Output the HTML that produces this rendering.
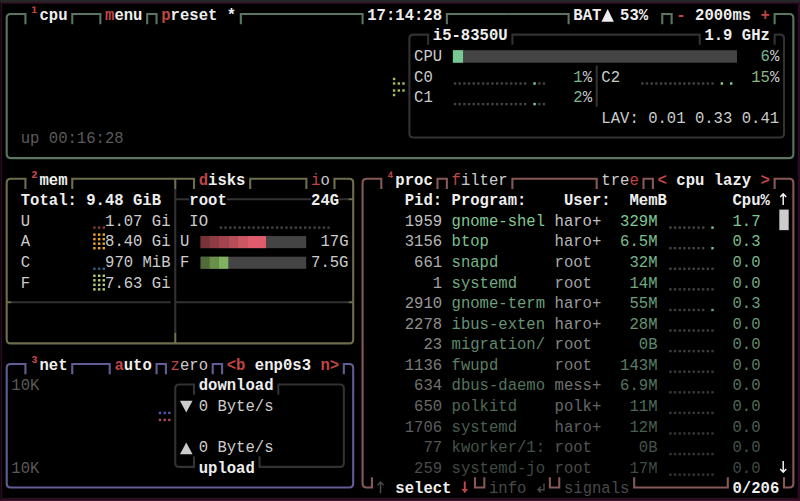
<!DOCTYPE html><html><head><meta charset="utf-8"><style>html,body{margin:0;padding:0;background:#000;width:800px;height:501px;overflow:hidden}svg{display:block}text{font-family:"Liberation Mono",monospace;white-space:pre}</style></head><body>
<svg width="800" height="501" viewBox="0 0 800 501">
<rect x="0" y="0" width="800" height="501" fill="#2c0b24"/>
<rect x="0" y="0" width="800" height="2.4" fill="#262626"/>
<rect x="0" y="2.4" width="1" height="499" fill="#12060f"/>
<rect x="0" y="499" width="800" height="0.6" fill="#14060f"/>
<rect x="0" y="499.6" width="800" height="1.4" fill="#3a1628"/>
<rect x="2.1" y="3.9" width="795.6" height="493.9" fill="#000"/>
<path d="M11.38,13.99H10.70Q6.70,13.99 6.70,17.99V24.29M11.38,13.99H20.75M20.75,13.99H26.48M25.43,12.94V24.29M71.21,13.99H76.94M72.26,12.94V24.29M76.94,13.99H86.30M86.30,13.99H95.67M95.67,13.99H101.40M100.35,12.94V24.29M146.13,13.99H151.86M147.18,12.94V24.29M151.86,13.99H157.59M156.54,12.94V24.29M239.78,13.99H245.51M240.83,12.94V24.29M245.51,13.99H254.88M254.88,13.99H264.24M264.24,13.99H273.61M273.60,13.99H282.97M282.97,13.99H292.33M292.33,13.99H301.70M301.70,13.99H311.06M311.06,13.99H320.43M320.43,13.99H329.80M329.80,13.99H339.16M339.16,13.99H348.52M348.52,13.99H357.89M357.89,13.99H363.62M362.57,12.94V24.29M445.81,13.99H451.54M446.86,12.94V24.29M451.54,13.99H460.90M460.90,13.99H470.27M470.27,13.99H479.63M479.63,13.99H489.00M489.00,13.99H498.37M498.37,13.99H507.73M507.73,13.99H517.10M517.10,13.99H526.46M526.46,13.99H535.83M535.83,13.99H545.19M545.19,13.99H554.55M554.55,13.99H563.92M563.92,13.99H569.65M568.60,12.94V24.29M661.20,13.99H666.94M662.25,12.94V24.29M666.93,13.99H672.67M671.62,12.94V24.29M773.58,13.99H779.32M774.63,12.94V24.29M779.32,13.99H788.68M788.68,13.99H789.36Q793.36,13.99 793.36,17.99V24.29M6.70,24.29V44.87M793.36,24.29V44.87M6.70,44.87V65.46M793.36,44.87V65.46M6.70,65.46V86.05M793.36,65.46V86.05M6.70,86.05V106.64M793.36,86.05V106.64M6.70,106.64V127.22M793.36,106.64V127.22M6.70,127.22V147.81M793.36,127.22V147.81M6.70,147.81V154.10Q6.70,158.10 10.70,158.10H11.38M11.38,158.10H20.75M20.75,158.10H30.12M30.11,158.10H39.48M39.48,158.10H48.85M48.85,158.10H58.21M58.21,158.10H67.58M67.58,158.10H76.94M76.94,158.10H86.30M86.30,158.10H95.67M95.67,158.10H105.03M105.03,158.10H114.40M114.40,158.10H123.76M123.77,158.10H133.13M133.13,158.10H142.50M142.50,158.10H151.86M151.86,158.10H161.23M161.23,158.10H170.59M170.59,158.10H179.96M179.96,158.10H189.32M189.32,158.10H198.69M198.69,158.10H208.05M208.05,158.10H217.42M217.42,158.10H226.78M226.78,158.10H236.15M236.15,158.10H245.51M245.51,158.10H254.88M254.88,158.10H264.24M264.24,158.10H273.61M273.60,158.10H282.97M282.97,158.10H292.33M292.33,158.10H301.70M301.70,158.10H311.06M311.06,158.10H320.43M320.43,158.10H329.80M329.80,158.10H339.16M339.16,158.10H348.52M348.52,158.10H357.89M357.89,158.10H367.25M367.25,158.10H376.62M376.62,158.10H385.99M385.99,158.10H395.35M395.35,158.10H404.71M404.71,158.10H414.08M414.08,158.10H423.44M423.44,158.10H432.81M432.81,158.10H442.18M442.18,158.10H451.54M451.54,158.10H460.90M460.90,158.10H470.27M470.27,158.10H479.63M479.63,158.10H489.00M489.00,158.10H498.37M498.37,158.10H507.73M507.73,158.10H517.10M517.10,158.10H526.46M526.46,158.10H535.83M535.83,158.10H545.19M545.19,158.10H554.55M554.55,158.10H563.92M563.92,158.10H573.28M573.28,158.10H582.65M582.65,158.10H592.01M592.01,158.10H601.38M601.38,158.10H610.75M610.75,158.10H620.11M620.11,158.10H629.48M629.48,158.10H638.84M638.84,158.10H648.21M648.21,158.10H657.57M657.57,158.10H666.94M666.93,158.10H676.30M676.30,158.10H685.66M685.66,158.10H695.03M695.03,158.10H704.39M704.39,158.10H713.76M713.76,158.10H723.12M723.12,158.10H732.49M732.49,158.10H741.86M741.86,158.10H751.22M751.22,158.10H760.59M760.59,158.10H769.95M769.95,158.10H779.32M779.32,158.10H788.68M793.36,147.81V154.10Q793.36,158.10 789.36,158.10H788.68" stroke="#5a7560" stroke-width="2.1" fill="none" stroke-linecap="butt"/>
<path d="M414.08,34.58H413.40Q409.40,34.58 409.40,38.58V44.87M414.08,34.58H423.44M423.44,34.58H429.18M428.13,33.53V44.87M511.36,34.58H517.10M512.41,33.53V44.87M517.10,34.58H526.46M526.46,34.58H535.83M535.83,34.58H545.19M545.19,34.58H554.55M554.55,34.58H563.92M563.92,34.58H573.28M573.28,34.58H582.65M582.65,34.58H592.01M592.01,34.58H601.38M601.38,34.58H610.75M610.75,34.58H620.11M620.11,34.58H629.48M629.48,34.58H638.84M638.84,34.58H648.21M648.21,34.58H657.57M657.57,34.58H666.94M666.93,34.58H676.30M676.30,34.58H685.66M685.66,34.58H695.03M695.03,34.58H700.76M699.71,33.53V44.87M773.58,34.58H779.32M774.63,33.53V44.87M779.32,34.58H780.00Q784.00,34.58 784.00,38.58V44.87M409.40,44.87V65.46M784.00,44.87V65.46M409.40,65.46V86.05M784.00,65.46V86.05M409.40,86.05V106.64M784.00,86.05V106.64M409.40,106.64V127.22M784.00,106.64V127.22M409.40,127.22V133.52Q409.40,137.52 413.40,137.52H414.08M414.08,137.52H423.44M423.44,137.52H432.81M432.81,137.52H442.18M442.18,137.52H451.54M451.54,137.52H460.90M460.90,137.52H470.27M470.27,137.52H479.63M479.63,137.52H489.00M489.00,137.52H498.37M498.37,137.52H507.73M507.73,137.52H517.10M517.10,137.52H526.46M526.46,137.52H535.83M535.83,137.52H545.19M545.19,137.52H554.55M554.55,137.52H563.92M563.92,137.52H573.28M573.28,137.52H582.65M582.65,137.52H592.01M592.01,137.52H601.38M601.38,137.52H610.75M610.75,137.52H620.11M620.11,137.52H629.48M629.48,137.52H638.84M638.84,137.52H648.21M648.21,137.52H657.57M657.57,137.52H666.94M666.93,137.52H676.30M676.30,137.52H685.66M685.66,137.52H695.03M695.03,137.52H704.39M704.39,137.52H713.76M713.76,137.52H723.12M723.12,137.52H732.49M732.49,137.52H741.86M741.86,137.52H751.22M751.22,137.52H760.59M760.59,137.52H769.95M769.95,137.52H779.32M784.00,127.22V133.52Q784.00,137.52 780.00,137.52H779.32M596.70,65.46V86.05M596.70,86.05V106.64M174.22,199.28H179.96M175.27,188.98V209.57M175.27,209.57V230.16M175.27,230.16V250.74M175.27,250.74V271.33M175.27,271.33V291.92M174.22,302.21H179.96M175.27,291.92V312.50M175.27,312.50V333.09M179.96,199.28H189.32M226.78,199.28H236.15M236.15,199.28H245.51M245.51,199.28H254.88M254.88,199.28H264.24M264.24,199.28H273.61M273.60,199.28H282.97M282.97,199.28H292.33M292.33,199.28H301.70M301.70,199.28H311.06M339.16,199.28H348.52M11.38,302.21H20.75M20.75,302.21H30.12M30.11,302.21H39.48M39.48,302.21H48.85M48.85,302.21H58.21M58.21,302.21H67.58M67.58,302.21H76.94M76.94,302.21H86.30M86.30,302.21H95.67M95.67,302.21H105.03M105.03,302.21H114.40M114.40,302.21H123.76M123.77,302.21H133.13M133.13,302.21H142.50M142.50,302.21H151.86M151.86,302.21H161.23M161.23,302.21H170.59M179.96,302.21H189.32M189.32,302.21H198.69M198.69,302.21H208.05M208.05,302.21H217.42M217.42,302.21H226.78M226.78,302.21H236.15M236.15,302.21H245.51M245.51,302.21H254.88M254.88,302.21H264.24M264.24,302.21H273.61M273.60,302.21H282.97M282.97,302.21H292.33M292.33,302.21H301.70M301.70,302.21H311.06M311.06,302.21H320.43M320.43,302.21H329.80M329.80,302.21H339.16M339.16,302.21H348.52M179.96,384.56H179.27Q175.27,384.56 175.27,388.56V394.85M179.96,384.56H189.32M189.32,384.56H195.05M194.00,383.51V394.85M277.24,384.56H282.97M278.29,383.51V394.85M282.97,384.56H292.33M292.33,384.56H301.70M301.70,384.56H311.06M311.06,384.56H320.43M320.43,384.56H329.80M329.80,384.56H339.16M339.16,384.56H339.84Q343.84,384.56 343.84,388.56V394.85M175.27,394.85V415.44M343.84,394.85V415.44M175.27,415.44V436.03M343.84,415.44V436.03M175.27,436.03V456.61M343.84,436.03V456.61M175.27,456.61V462.91Q175.27,466.91 179.27,466.91H179.96M179.96,466.91H189.32M189.32,466.91H195.05M194.00,456.61V467.96M258.51,466.91H264.24M259.56,456.61V467.96M264.24,466.91H273.61M273.60,466.91H282.97M282.97,466.91H292.33M292.33,466.91H301.70M301.70,466.91H311.06M311.06,466.91H320.43M320.43,466.91H329.80M329.80,466.91H339.16M343.84,456.61V462.91Q343.84,466.91 339.84,466.91H339.16" stroke="#323232" stroke-width="2.1" fill="none" stroke-linecap="butt"/>
<path d="M11.38,178.69H10.70Q6.70,178.69 6.70,182.69V188.98M11.38,178.69H20.75M20.75,178.69H26.48M25.43,177.64V188.98M71.21,178.69H76.94M72.26,177.64V188.98M76.94,178.69H86.30M86.30,178.69H95.67M95.67,178.69H105.03M105.03,178.69H114.40M114.40,178.69H123.76M123.77,178.69H133.13M133.13,178.69H142.50M142.50,178.69H151.86M151.86,178.69H161.23M161.23,178.69H170.59M170.59,178.69H179.96M175.27,177.64V188.98M179.96,178.69H189.32M189.32,178.69H195.05M194.00,177.64V188.98M249.14,178.69H254.88M250.19,177.64V188.98M254.88,178.69H264.24M264.24,178.69H273.61M273.60,178.69H282.97M282.97,178.69H292.33M292.33,178.69H301.70M301.70,178.69H307.43M306.38,177.64V188.98M333.43,178.69H339.16M334.48,177.64V188.98M339.16,178.69H348.52M348.52,178.69H349.21Q353.21,178.69 353.21,182.69V188.98M6.70,188.98V209.57M348.52,199.28H354.26M353.21,188.98V209.57M6.70,209.57V230.16M353.21,209.57V230.16M6.70,230.16V250.74M353.21,230.16V250.74M6.70,250.74V271.33M353.21,250.74V271.33M6.70,271.33V291.92M353.21,271.33V291.92M5.65,302.21H11.38M6.70,291.92V312.50M348.52,302.21H354.26M353.21,291.92V312.50M6.70,312.50V333.09M353.21,312.50V333.09M6.70,333.09V339.39Q6.70,343.39 10.70,343.39H11.38M11.38,343.39H20.75M20.75,343.39H30.12M30.11,343.39H39.48M39.48,343.39H48.85M48.85,343.39H58.21M58.21,343.39H67.58M67.58,343.39H76.94M76.94,343.39H86.30M86.30,343.39H95.67M95.67,343.39H105.03M105.03,343.39H114.40M114.40,343.39H123.76M123.77,343.39H133.13M133.13,343.39H142.50M142.50,343.39H151.86M151.86,343.39H161.23M161.23,343.39H170.59M170.59,343.39H179.96M175.27,333.09V344.44M179.96,343.39H189.32M189.32,343.39H198.69M198.69,343.39H208.05M208.05,343.39H217.42M217.42,343.39H226.78M226.78,343.39H236.15M236.15,343.39H245.51M245.51,343.39H254.88M254.88,343.39H264.24M264.24,343.39H273.61M273.60,343.39H282.97M282.97,343.39H292.33M292.33,343.39H301.70M301.70,343.39H311.06M311.06,343.39H320.43M320.43,343.39H329.80M329.80,343.39H339.16M339.16,343.39H348.52M353.21,333.09V339.39Q353.21,343.39 349.21,343.39H348.52" stroke="#6e6e4c" stroke-width="2.1" fill="none" stroke-linecap="butt"/>
<path d="M11.38,363.97H10.70Q6.70,363.97 6.70,367.97V374.27M11.38,363.97H20.75M20.75,363.97H26.48M25.43,362.92V374.27M71.21,363.97H76.94M72.26,362.92V374.27M76.94,363.97H86.30M86.30,363.97H95.67M95.67,363.97H105.03M105.03,363.97H110.77M109.72,362.92V374.27M155.49,363.97H161.23M156.54,362.92V374.27M161.23,363.97H166.96M165.91,362.92V374.27M211.68,363.97H217.42M212.73,362.92V374.27M217.42,363.97H223.15M222.10,362.92V374.27M342.79,363.97H348.52M343.84,362.92V374.27M348.52,363.97H349.21Q353.21,363.97 353.21,367.97V374.27M6.70,374.27V394.85M353.21,374.27V394.85M6.70,394.85V415.44M353.21,394.85V415.44M6.70,415.44V436.03M353.21,415.44V436.03M6.70,436.03V456.61M353.21,436.03V456.61M6.70,456.61V477.20M353.21,456.61V477.20M6.70,477.20V483.49Q6.70,487.49 10.70,487.49H11.38M11.38,487.49H20.75M20.75,487.49H30.12M30.11,487.49H39.48M39.48,487.49H48.85M48.85,487.49H58.21M58.21,487.49H67.58M67.58,487.49H76.94M76.94,487.49H86.30M86.30,487.49H95.67M95.67,487.49H105.03M105.03,487.49H114.40M114.40,487.49H123.76M123.77,487.49H133.13M133.13,487.49H142.50M142.50,487.49H151.86M151.86,487.49H161.23M161.23,487.49H170.59M170.59,487.49H179.96M179.96,487.49H189.32M189.32,487.49H198.69M198.69,487.49H208.05M208.05,487.49H217.42M217.42,487.49H226.78M226.78,487.49H236.15M236.15,487.49H245.51M245.51,487.49H254.88M254.88,487.49H264.24M264.24,487.49H273.61M273.60,487.49H282.97M282.97,487.49H292.33M292.33,487.49H301.70M301.70,487.49H311.06M311.06,487.49H320.43M320.43,487.49H329.80M329.80,487.49H339.16M339.16,487.49H348.52M353.21,477.20V483.49Q353.21,487.49 349.21,487.49H348.52" stroke="#625d94" stroke-width="2.1" fill="none" stroke-linecap="butt"/>
<path d="M367.25,178.69H366.57Q362.57,178.69 362.57,182.69V188.98M367.25,178.69H376.62M376.62,178.69H382.35M381.30,177.64V188.98M436.44,178.69H442.18M437.49,177.64V188.98M442.18,178.69H447.91M446.86,177.64V188.98M511.36,178.69H517.10M512.41,177.64V188.98M517.10,178.69H526.46M526.46,178.69H535.83M535.83,178.69H545.19M545.19,178.69H554.55M554.55,178.69H563.92M563.92,178.69H573.28M573.28,178.69H582.65M582.65,178.69H592.01M592.01,178.69H597.75M596.70,177.64V188.98M642.47,178.69H648.21M643.52,177.64V188.98M648.21,178.69H653.94M652.89,177.64V188.98M773.58,178.69H779.32M774.63,177.64V188.98M779.32,178.69H788.68M788.68,178.69H789.36Q793.36,178.69 793.36,182.69V188.98M362.57,188.98V209.57M793.36,188.98V209.57M362.57,209.57V230.16M793.36,209.57V230.16M362.57,230.16V250.74M793.36,230.16V250.74M362.57,250.74V271.33M793.36,250.74V271.33M362.57,271.33V291.92M793.36,271.33V291.92M362.57,291.92V312.50M793.36,291.92V312.50M362.57,312.50V333.09M793.36,312.50V333.09M362.57,333.09V353.68M793.36,333.09V353.68M362.57,353.68V374.27M793.36,353.68V374.27M362.57,374.27V394.85M793.36,374.27V394.85M362.57,394.85V415.44M793.36,394.85V415.44M362.57,415.44V436.03M793.36,415.44V436.03M362.57,436.03V456.61M793.36,436.03V456.61M362.57,456.61V477.20M793.36,456.61V477.20M362.57,477.20V483.49Q362.57,487.49 366.57,487.49H367.25M367.25,487.49H372.99M371.94,477.20V488.54M473.90,487.49H479.63M474.95,477.20V488.54M479.63,487.49H485.37M484.32,477.20V488.54M548.82,487.49H554.55M549.87,477.20V488.54M554.55,487.49H560.29M559.24,477.20V488.54M633.11,487.49H638.84M634.16,477.20V488.54M638.84,487.49H648.21M648.21,487.49H657.57M657.57,487.49H666.94M666.93,487.49H676.30M676.30,487.49H685.66M685.66,487.49H695.03M695.03,487.49H704.39M704.39,487.49H713.76M713.76,487.49H723.12M723.12,487.49H728.86M727.81,477.20V488.54M782.95,487.49H788.68M784.00,477.20V488.54M793.36,477.20V483.49Q793.36,487.49 789.36,487.49H788.68" stroke="#865858" stroke-width="2.1" fill="none" stroke-linecap="butt"/>
<rect x="452.90" y="50.20" width="284.10" height="12.50" fill="#444444"/>
<rect x="452.90" y="50.20" width="10.15" height="12.50" fill="#78c893"/>
<rect x="453.84" y="82.30" width="2.40" height="2.40" fill="#424242"/>
<rect x="458.44" y="82.30" width="2.40" height="2.40" fill="#424242"/>
<rect x="463.20" y="82.30" width="2.40" height="2.40" fill="#424242"/>
<rect x="467.81" y="82.30" width="2.40" height="2.40" fill="#424242"/>
<rect x="472.57" y="82.30" width="2.40" height="2.40" fill="#424242"/>
<rect x="477.17" y="82.30" width="2.40" height="2.40" fill="#424242"/>
<rect x="481.94" y="82.30" width="2.40" height="2.40" fill="#424242"/>
<rect x="486.54" y="82.30" width="2.40" height="2.40" fill="#424242"/>
<rect x="491.30" y="82.30" width="2.40" height="2.40" fill="#424242"/>
<rect x="495.90" y="82.30" width="2.40" height="2.40" fill="#424242"/>
<rect x="500.67" y="82.30" width="2.40" height="2.40" fill="#424242"/>
<rect x="505.27" y="82.30" width="2.40" height="2.40" fill="#424242"/>
<rect x="510.03" y="82.30" width="2.40" height="2.40" fill="#424242"/>
<rect x="514.63" y="82.30" width="2.40" height="2.40" fill="#424242"/>
<rect x="519.39" y="82.30" width="2.40" height="2.40" fill="#424242"/>
<rect x="524.00" y="82.30" width="2.40" height="2.40" fill="#424242"/>
<rect x="533.36" y="82.30" width="2.40" height="2.40" fill="#7ccf98"/>
<rect x="538.12" y="82.30" width="2.40" height="2.40" fill="#424242"/>
<rect x="542.73" y="82.30" width="2.40" height="2.40" fill="#424242"/>
<rect x="453.84" y="102.89" width="2.40" height="2.40" fill="#424242"/>
<rect x="458.44" y="102.89" width="2.40" height="2.40" fill="#424242"/>
<rect x="463.20" y="102.89" width="2.40" height="2.40" fill="#424242"/>
<rect x="467.81" y="102.89" width="2.40" height="2.40" fill="#424242"/>
<rect x="472.57" y="102.89" width="2.40" height="2.40" fill="#424242"/>
<rect x="477.17" y="102.89" width="2.40" height="2.40" fill="#424242"/>
<rect x="481.94" y="102.89" width="2.40" height="2.40" fill="#424242"/>
<rect x="486.54" y="102.89" width="2.40" height="2.40" fill="#424242"/>
<rect x="491.30" y="102.89" width="2.40" height="2.40" fill="#424242"/>
<rect x="495.90" y="102.89" width="2.40" height="2.40" fill="#424242"/>
<rect x="500.67" y="102.89" width="2.40" height="2.40" fill="#424242"/>
<rect x="505.27" y="102.89" width="2.40" height="2.40" fill="#424242"/>
<rect x="510.03" y="102.89" width="2.40" height="2.40" fill="#424242"/>
<rect x="514.63" y="102.89" width="2.40" height="2.40" fill="#424242"/>
<rect x="519.39" y="102.89" width="2.40" height="2.40" fill="#424242"/>
<rect x="524.00" y="102.89" width="2.40" height="2.40" fill="#424242"/>
<rect x="533.36" y="102.89" width="2.40" height="2.40" fill="#7ccf98"/>
<rect x="538.12" y="102.89" width="2.40" height="2.40" fill="#424242"/>
<rect x="542.73" y="102.89" width="2.40" height="2.40" fill="#424242"/>
<rect x="641.14" y="82.30" width="2.40" height="2.40" fill="#424242"/>
<rect x="645.74" y="82.30" width="2.40" height="2.40" fill="#424242"/>
<rect x="650.50" y="82.30" width="2.40" height="2.40" fill="#424242"/>
<rect x="655.11" y="82.30" width="2.40" height="2.40" fill="#424242"/>
<rect x="659.87" y="82.30" width="2.40" height="2.40" fill="#424242"/>
<rect x="664.47" y="82.30" width="2.40" height="2.40" fill="#424242"/>
<rect x="669.23" y="82.30" width="2.40" height="2.40" fill="#424242"/>
<rect x="673.83" y="82.30" width="2.40" height="2.40" fill="#424242"/>
<rect x="678.60" y="82.30" width="2.40" height="2.40" fill="#424242"/>
<rect x="683.20" y="82.30" width="2.40" height="2.40" fill="#424242"/>
<rect x="687.96" y="82.30" width="2.40" height="2.40" fill="#424242"/>
<rect x="692.56" y="82.30" width="2.40" height="2.40" fill="#424242"/>
<rect x="697.33" y="82.30" width="2.40" height="2.40" fill="#424242"/>
<rect x="701.93" y="82.30" width="2.40" height="2.40" fill="#424242"/>
<rect x="706.69" y="82.30" width="2.40" height="2.40" fill="#424242"/>
<rect x="711.29" y="82.30" width="2.40" height="2.40" fill="#424242"/>
<rect x="720.66" y="82.30" width="2.40" height="2.40" fill="#9ccf88"/>
<rect x="730.02" y="82.30" width="2.40" height="2.40" fill="#80d0a8"/>
<rect x="392.89" y="77.77" width="2.40" height="2.40" fill="#a8c058"/>
<rect x="392.89" y="82.30" width="2.40" height="2.40" fill="#a8c058"/>
<rect x="397.65" y="82.30" width="2.40" height="2.40" fill="#a8c058"/>
<rect x="402.25" y="82.30" width="2.40" height="2.40" fill="#a8c058"/>
<rect x="392.89" y="89.30" width="2.40" height="2.40" fill="#a8c058"/>
<rect x="392.89" y="93.83" width="2.40" height="2.40" fill="#a8c058"/>
<rect x="397.65" y="89.30" width="2.40" height="2.40" fill="#a8c058"/>
<rect x="402.25" y="89.30" width="2.40" height="2.40" fill="#a8c058"/>
<rect x="219.72" y="226.41" width="2.40" height="2.40" fill="#424242"/>
<rect x="224.32" y="226.41" width="2.40" height="2.40" fill="#424242"/>
<rect x="229.08" y="226.41" width="2.40" height="2.40" fill="#424242"/>
<rect x="233.68" y="226.41" width="2.40" height="2.40" fill="#424242"/>
<rect x="238.45" y="226.41" width="2.40" height="2.40" fill="#424242"/>
<rect x="243.05" y="226.41" width="2.40" height="2.40" fill="#424242"/>
<rect x="247.81" y="226.41" width="2.40" height="2.40" fill="#424242"/>
<rect x="252.41" y="226.41" width="2.40" height="2.40" fill="#424242"/>
<rect x="257.18" y="226.41" width="2.40" height="2.40" fill="#424242"/>
<rect x="261.78" y="226.41" width="2.40" height="2.40" fill="#424242"/>
<rect x="266.54" y="226.41" width="2.40" height="2.40" fill="#424242"/>
<rect x="271.14" y="226.41" width="2.40" height="2.40" fill="#424242"/>
<rect x="275.90" y="226.41" width="2.40" height="2.40" fill="#424242"/>
<rect x="280.50" y="226.41" width="2.40" height="2.40" fill="#424242"/>
<rect x="285.27" y="226.41" width="2.40" height="2.40" fill="#424242"/>
<rect x="289.87" y="226.41" width="2.40" height="2.40" fill="#424242"/>
<rect x="294.63" y="226.41" width="2.40" height="2.40" fill="#424242"/>
<rect x="299.24" y="226.41" width="2.40" height="2.40" fill="#424242"/>
<rect x="304.00" y="226.41" width="2.40" height="2.40" fill="#424242"/>
<rect x="308.60" y="226.41" width="2.40" height="2.40" fill="#424242"/>
<rect x="313.37" y="226.41" width="2.40" height="2.40" fill="#424242"/>
<rect x="317.97" y="226.41" width="2.40" height="2.40" fill="#424242"/>
<rect x="322.73" y="226.41" width="2.40" height="2.40" fill="#424242"/>
<rect x="327.33" y="226.41" width="2.40" height="2.40" fill="#424242"/>
<rect x="93.20" y="226.41" width="2.40" height="2.40" fill="#8a3a36"/>
<rect x="97.97" y="226.41" width="2.40" height="2.40" fill="#8a3a36"/>
<rect x="102.57" y="226.41" width="2.40" height="2.40" fill="#8a3a36"/>
<rect x="93.20" y="233.41" width="2.40" height="2.40" fill="#f0a42a"/>
<rect x="97.97" y="233.41" width="2.40" height="2.40" fill="#f0a42a"/>
<rect x="102.57" y="233.41" width="2.40" height="2.40" fill="#f0a42a"/>
<rect x="93.20" y="237.94" width="2.40" height="2.40" fill="#f0a42a"/>
<rect x="97.97" y="237.94" width="2.40" height="2.40" fill="#f0a42a"/>
<rect x="102.57" y="237.94" width="2.40" height="2.40" fill="#f0a42a"/>
<rect x="93.20" y="242.47" width="2.40" height="2.40" fill="#f0a42a"/>
<rect x="97.97" y="242.47" width="2.40" height="2.40" fill="#f0a42a"/>
<rect x="102.57" y="242.47" width="2.40" height="2.40" fill="#f0a42a"/>
<rect x="93.20" y="247.00" width="2.40" height="2.40" fill="#f0a42a"/>
<rect x="97.97" y="247.00" width="2.40" height="2.40" fill="#f0a42a"/>
<rect x="102.57" y="247.00" width="2.40" height="2.40" fill="#f0a42a"/>
<rect x="93.20" y="267.58" width="2.40" height="2.40" fill="#2f5f8a"/>
<rect x="97.97" y="267.58" width="2.40" height="2.40" fill="#2f5f8a"/>
<rect x="102.57" y="267.58" width="2.40" height="2.40" fill="#2f5f8a"/>
<rect x="93.20" y="274.58" width="2.40" height="2.40" fill="#b5d075"/>
<rect x="97.97" y="274.58" width="2.40" height="2.40" fill="#b5d075"/>
<rect x="102.57" y="274.58" width="2.40" height="2.40" fill="#b5d075"/>
<rect x="93.20" y="279.11" width="2.40" height="2.40" fill="#b5d075"/>
<rect x="97.97" y="279.11" width="2.40" height="2.40" fill="#b5d075"/>
<rect x="102.57" y="279.11" width="2.40" height="2.40" fill="#b5d075"/>
<rect x="93.20" y="283.64" width="2.40" height="2.40" fill="#b5d075"/>
<rect x="97.97" y="283.64" width="2.40" height="2.40" fill="#b5d075"/>
<rect x="102.57" y="283.64" width="2.40" height="2.40" fill="#b5d075"/>
<rect x="93.20" y="288.17" width="2.40" height="2.40" fill="#b5d075"/>
<rect x="97.97" y="288.17" width="2.40" height="2.40" fill="#b5d075"/>
<rect x="102.57" y="288.17" width="2.40" height="2.40" fill="#b5d075"/>
<rect x="200.60" y="236.05" width="105.60" height="12.10" fill="#444444"/>
<rect x="200.60" y="236.05" width="8.90" height="12.10" fill="#7a3239"/>
<rect x="209.50" y="236.05" width="9.40" height="12.10" fill="#8f3b43"/>
<rect x="218.90" y="236.05" width="9.60" height="12.10" fill="#a4444e"/>
<rect x="228.50" y="236.05" width="9.40" height="12.10" fill="#b84d59"/>
<rect x="237.90" y="236.05" width="9.30" height="12.10" fill="#cc5664"/>
<rect x="247.20" y="236.05" width="18.80" height="12.10" fill="#e05c6c"/>
<rect x="200.60" y="256.70" width="105.60" height="12.10" fill="#444444"/>
<rect x="200.60" y="256.70" width="8.90" height="12.10" fill="#506a3a"/>
<rect x="209.50" y="256.70" width="9.40" height="12.10" fill="#68904a"/>
<rect x="218.90" y="256.70" width="9.40" height="12.10" fill="#80b060"/>
<rect x="158.76" y="411.69" width="2.40" height="2.40" fill="#5056b4"/>
<rect x="158.76" y="418.69" width="2.40" height="2.40" fill="#a04a68"/>
<rect x="163.53" y="411.69" width="2.40" height="2.40" fill="#5056b4"/>
<rect x="163.53" y="418.69" width="2.40" height="2.40" fill="#a04a68"/>
<rect x="168.13" y="411.69" width="2.40" height="2.40" fill="#5056b4"/>
<rect x="168.13" y="418.69" width="2.40" height="2.40" fill="#a04a68"/>
<rect x="779.32" y="209.57" width="9.37" height="20.59" fill="#cccccc"/>
<rect x="669.23" y="226.41" width="2.40" height="2.40" fill="#444444"/>
<rect x="673.83" y="226.41" width="2.40" height="2.40" fill="#444444"/>
<rect x="678.60" y="226.41" width="2.40" height="2.40" fill="#444444"/>
<rect x="683.20" y="226.41" width="2.40" height="2.40" fill="#444444"/>
<rect x="687.96" y="226.41" width="2.40" height="2.40" fill="#444444"/>
<rect x="692.56" y="226.41" width="2.40" height="2.40" fill="#444444"/>
<rect x="697.33" y="226.41" width="2.40" height="2.40" fill="#444444"/>
<rect x="701.93" y="226.41" width="2.40" height="2.40" fill="#444444"/>
<rect x="711.29" y="226.41" width="2.40" height="2.40" fill="#80c896"/>
<rect x="669.23" y="247.00" width="2.40" height="2.40" fill="#434343"/>
<rect x="673.83" y="247.00" width="2.40" height="2.40" fill="#434343"/>
<rect x="678.60" y="247.00" width="2.40" height="2.40" fill="#434343"/>
<rect x="683.20" y="247.00" width="2.40" height="2.40" fill="#434343"/>
<rect x="687.96" y="247.00" width="2.40" height="2.40" fill="#434343"/>
<rect x="692.56" y="247.00" width="2.40" height="2.40" fill="#434343"/>
<rect x="697.33" y="247.00" width="2.40" height="2.40" fill="#434343"/>
<rect x="701.93" y="247.00" width="2.40" height="2.40" fill="#434343"/>
<rect x="711.29" y="247.00" width="2.40" height="2.40" fill="#7bbf90"/>
<rect x="669.23" y="267.58" width="2.40" height="2.40" fill="#414141"/>
<rect x="673.83" y="267.58" width="2.40" height="2.40" fill="#414141"/>
<rect x="678.60" y="267.58" width="2.40" height="2.40" fill="#414141"/>
<rect x="683.20" y="267.58" width="2.40" height="2.40" fill="#414141"/>
<rect x="687.96" y="267.58" width="2.40" height="2.40" fill="#414141"/>
<rect x="692.56" y="267.58" width="2.40" height="2.40" fill="#414141"/>
<rect x="697.33" y="267.58" width="2.40" height="2.40" fill="#414141"/>
<rect x="701.93" y="267.58" width="2.40" height="2.40" fill="#414141"/>
<rect x="706.69" y="267.58" width="2.40" height="2.40" fill="#414141"/>
<rect x="711.29" y="267.58" width="2.40" height="2.40" fill="#414141"/>
<rect x="669.23" y="288.17" width="2.40" height="2.40" fill="#404040"/>
<rect x="673.83" y="288.17" width="2.40" height="2.40" fill="#404040"/>
<rect x="678.60" y="288.17" width="2.40" height="2.40" fill="#404040"/>
<rect x="683.20" y="288.17" width="2.40" height="2.40" fill="#404040"/>
<rect x="687.96" y="288.17" width="2.40" height="2.40" fill="#404040"/>
<rect x="692.56" y="288.17" width="2.40" height="2.40" fill="#404040"/>
<rect x="697.33" y="288.17" width="2.40" height="2.40" fill="#404040"/>
<rect x="701.93" y="288.17" width="2.40" height="2.40" fill="#404040"/>
<rect x="706.69" y="288.17" width="2.40" height="2.40" fill="#404040"/>
<rect x="711.29" y="288.17" width="2.40" height="2.40" fill="#404040"/>
<rect x="669.23" y="308.76" width="2.40" height="2.40" fill="#3e3e3e"/>
<rect x="673.83" y="308.76" width="2.40" height="2.40" fill="#3e3e3e"/>
<rect x="678.60" y="308.76" width="2.40" height="2.40" fill="#3e3e3e"/>
<rect x="683.20" y="308.76" width="2.40" height="2.40" fill="#3e3e3e"/>
<rect x="687.96" y="308.76" width="2.40" height="2.40" fill="#3e3e3e"/>
<rect x="692.56" y="308.76" width="2.40" height="2.40" fill="#3e3e3e"/>
<rect x="697.33" y="308.76" width="2.40" height="2.40" fill="#3e3e3e"/>
<rect x="701.93" y="308.76" width="2.40" height="2.40" fill="#3e3e3e"/>
<rect x="711.29" y="308.76" width="2.40" height="2.40" fill="#6da37e"/>
<rect x="669.23" y="329.34" width="2.40" height="2.40" fill="#3d3d3d"/>
<rect x="673.83" y="329.34" width="2.40" height="2.40" fill="#3d3d3d"/>
<rect x="678.60" y="329.34" width="2.40" height="2.40" fill="#3d3d3d"/>
<rect x="683.20" y="329.34" width="2.40" height="2.40" fill="#3d3d3d"/>
<rect x="687.96" y="329.34" width="2.40" height="2.40" fill="#3d3d3d"/>
<rect x="692.56" y="329.34" width="2.40" height="2.40" fill="#3d3d3d"/>
<rect x="697.33" y="329.34" width="2.40" height="2.40" fill="#3d3d3d"/>
<rect x="701.93" y="329.34" width="2.40" height="2.40" fill="#3d3d3d"/>
<rect x="706.69" y="329.34" width="2.40" height="2.40" fill="#3d3d3d"/>
<rect x="711.29" y="329.34" width="2.40" height="2.40" fill="#3d3d3d"/>
<rect x="669.23" y="349.93" width="2.40" height="2.40" fill="#3c3c3c"/>
<rect x="673.83" y="349.93" width="2.40" height="2.40" fill="#3c3c3c"/>
<rect x="678.60" y="349.93" width="2.40" height="2.40" fill="#3c3c3c"/>
<rect x="683.20" y="349.93" width="2.40" height="2.40" fill="#3c3c3c"/>
<rect x="687.96" y="349.93" width="2.40" height="2.40" fill="#3c3c3c"/>
<rect x="692.56" y="349.93" width="2.40" height="2.40" fill="#3c3c3c"/>
<rect x="697.33" y="349.93" width="2.40" height="2.40" fill="#3c3c3c"/>
<rect x="701.93" y="349.93" width="2.40" height="2.40" fill="#3c3c3c"/>
<rect x="706.69" y="349.93" width="2.40" height="2.40" fill="#3c3c3c"/>
<rect x="711.29" y="349.93" width="2.40" height="2.40" fill="#3c3c3c"/>
<rect x="669.23" y="370.52" width="2.40" height="2.40" fill="#3a3a3a"/>
<rect x="673.83" y="370.52" width="2.40" height="2.40" fill="#3a3a3a"/>
<rect x="678.60" y="370.52" width="2.40" height="2.40" fill="#3a3a3a"/>
<rect x="683.20" y="370.52" width="2.40" height="2.40" fill="#3a3a3a"/>
<rect x="687.96" y="370.52" width="2.40" height="2.40" fill="#3a3a3a"/>
<rect x="692.56" y="370.52" width="2.40" height="2.40" fill="#3a3a3a"/>
<rect x="697.33" y="370.52" width="2.40" height="2.40" fill="#3a3a3a"/>
<rect x="701.93" y="370.52" width="2.40" height="2.40" fill="#3a3a3a"/>
<rect x="706.69" y="370.52" width="2.40" height="2.40" fill="#3a3a3a"/>
<rect x="711.29" y="370.52" width="2.40" height="2.40" fill="#3a3a3a"/>
<rect x="669.23" y="391.11" width="2.40" height="2.40" fill="#393939"/>
<rect x="673.83" y="391.11" width="2.40" height="2.40" fill="#393939"/>
<rect x="678.60" y="391.11" width="2.40" height="2.40" fill="#393939"/>
<rect x="683.20" y="391.11" width="2.40" height="2.40" fill="#393939"/>
<rect x="687.96" y="391.11" width="2.40" height="2.40" fill="#393939"/>
<rect x="692.56" y="391.11" width="2.40" height="2.40" fill="#393939"/>
<rect x="697.33" y="391.11" width="2.40" height="2.40" fill="#393939"/>
<rect x="701.93" y="391.11" width="2.40" height="2.40" fill="#393939"/>
<rect x="706.69" y="391.11" width="2.40" height="2.40" fill="#393939"/>
<rect x="711.29" y="391.11" width="2.40" height="2.40" fill="#393939"/>
<rect x="669.23" y="411.69" width="2.40" height="2.40" fill="#373737"/>
<rect x="673.83" y="411.69" width="2.40" height="2.40" fill="#373737"/>
<rect x="678.60" y="411.69" width="2.40" height="2.40" fill="#373737"/>
<rect x="683.20" y="411.69" width="2.40" height="2.40" fill="#373737"/>
<rect x="687.96" y="411.69" width="2.40" height="2.40" fill="#373737"/>
<rect x="692.56" y="411.69" width="2.40" height="2.40" fill="#373737"/>
<rect x="697.33" y="411.69" width="2.40" height="2.40" fill="#373737"/>
<rect x="701.93" y="411.69" width="2.40" height="2.40" fill="#373737"/>
<rect x="706.69" y="411.69" width="2.40" height="2.40" fill="#373737"/>
<rect x="711.29" y="411.69" width="2.40" height="2.40" fill="#373737"/>
<rect x="669.23" y="432.28" width="2.40" height="2.40" fill="#363636"/>
<rect x="673.83" y="432.28" width="2.40" height="2.40" fill="#363636"/>
<rect x="678.60" y="432.28" width="2.40" height="2.40" fill="#363636"/>
<rect x="683.20" y="432.28" width="2.40" height="2.40" fill="#363636"/>
<rect x="687.96" y="432.28" width="2.40" height="2.40" fill="#363636"/>
<rect x="692.56" y="432.28" width="2.40" height="2.40" fill="#363636"/>
<rect x="697.33" y="432.28" width="2.40" height="2.40" fill="#363636"/>
<rect x="701.93" y="432.28" width="2.40" height="2.40" fill="#363636"/>
<rect x="706.69" y="432.28" width="2.40" height="2.40" fill="#363636"/>
<rect x="711.29" y="432.28" width="2.40" height="2.40" fill="#363636"/>
<rect x="669.23" y="452.87" width="2.40" height="2.40" fill="#343434"/>
<rect x="673.83" y="452.87" width="2.40" height="2.40" fill="#343434"/>
<rect x="678.60" y="452.87" width="2.40" height="2.40" fill="#343434"/>
<rect x="683.20" y="452.87" width="2.40" height="2.40" fill="#343434"/>
<rect x="687.96" y="452.87" width="2.40" height="2.40" fill="#343434"/>
<rect x="692.56" y="452.87" width="2.40" height="2.40" fill="#343434"/>
<rect x="697.33" y="452.87" width="2.40" height="2.40" fill="#343434"/>
<rect x="701.93" y="452.87" width="2.40" height="2.40" fill="#343434"/>
<rect x="706.69" y="452.87" width="2.40" height="2.40" fill="#343434"/>
<rect x="711.29" y="452.87" width="2.40" height="2.40" fill="#343434"/>
<rect x="669.23" y="473.45" width="2.40" height="2.40" fill="#333333"/>
<rect x="673.83" y="473.45" width="2.40" height="2.40" fill="#333333"/>
<rect x="678.60" y="473.45" width="2.40" height="2.40" fill="#333333"/>
<rect x="683.20" y="473.45" width="2.40" height="2.40" fill="#333333"/>
<rect x="687.96" y="473.45" width="2.40" height="2.40" fill="#333333"/>
<rect x="692.56" y="473.45" width="2.40" height="2.40" fill="#333333"/>
<rect x="697.33" y="473.45" width="2.40" height="2.40" fill="#333333"/>
<rect x="701.93" y="473.45" width="2.40" height="2.40" fill="#333333"/>
<rect x="706.69" y="473.45" width="2.40" height="2.40" fill="#333333"/>
<rect x="711.29" y="473.45" width="2.40" height="2.40" fill="#333333"/>
<path d="M601.48,21.70L607.68,9.00L613.88,21.70Z" fill="#eeeeee"/>
<path d="M179.96,400.75L192.56,400.75L186.26,412.45Z" fill="#cccccc"/>
<path d="M179.96,454.13L186.26,442.43L192.56,454.13Z" fill="#cccccc"/>
<path d="M380.52,482.00V493.30M377.52,485.30L380.52,482.10L383.52,485.30" stroke="#4a4a4a" stroke-width="1.5" fill="none"/>
<path d="M464.80,481.50V490.30" stroke="#c04545" stroke-width="2.0"/>
<path d="M461.60,488.90L464.80,493.30L468.00,488.90Z" fill="#c04545"/>
<path d="M544.03,483.50V489.70H538.03M540.83,486.80L538.03,489.70L540.83,492.40" stroke="#4a4a4a" stroke-width="1.4" fill="none"/>
<path d="M783.22,193.78V205.08M780.22,197.08L783.22,193.88L786.22,197.08" stroke="#eeeeee" stroke-width="1.5" fill="none"/>
<path d="M783.22,460.91V472.21M780.22,468.91L783.22,472.11L786.22,468.91" stroke="#eeeeee" stroke-width="1.5" fill="none"/>
<g transform="scale(0.91814,1)" font-size="17.0">
<text x="32.69" y="17.50" fill="#c04545" font-weight="bold" font-size="16">¹</text>
<text x="32.69" y="182.20" fill="#c04545" font-weight="bold" font-size="16">²</text>
<text x="32.69" y="367.48" fill="#c04545" font-weight="bold" font-size="16">³</text>
<text x="420.29" y="182.20" fill="#c04545" font-weight="bold" font-size="16">⁴</text>
<text x="43.00" y="19.90" fill="#eeeeee" font-weight="bold" xml:space="preserve">cpu</text>
<text x="114.40" y="19.90" fill="#c04545" font-weight="bold" xml:space="preserve">m</text>
<text x="124.60" y="19.90" fill="#eeeeee" font-weight="bold" xml:space="preserve">enu</text>
<text x="175.60" y="19.90" fill="#c04545" font-weight="bold" xml:space="preserve">p</text>
<text x="185.80" y="19.90" fill="#eeeeee" font-weight="bold" xml:space="preserve">reset *</text>
<text x="400.00" y="19.90" fill="#eeeeee" font-weight="bold" xml:space="preserve">17:14:28</text>
<text x="624.40" y="19.90" fill="#eeeeee" font-weight="bold" xml:space="preserve">BAT</text>
<text x="665.20" y="19.90" fill="#eeeeee" font-weight="bold" xml:space="preserve"> 53%</text>
<text x="736.60" y="19.90" fill="#c04545" font-weight="bold" xml:space="preserve">-</text>
<text x="757.00" y="19.90" fill="#eeeeee" font-weight="bold" xml:space="preserve">2000ms</text>
<text x="828.40" y="19.90" fill="#c04545" font-weight="bold" xml:space="preserve">+</text>
<text x="471.40" y="40.49" fill="#eeeeee" font-weight="bold" xml:space="preserve">i5-8350U</text>
<text x="767.20" y="40.49" fill="#eeeeee" font-weight="bold" xml:space="preserve">1.9 GHz</text>
<text x="451.00" y="61.07" fill="#cccccc" xml:space="preserve">CPU</text>
<text x="828.40" y="61.07" fill="#7ab890" xml:space="preserve">6</text>
<text x="838.60" y="61.07" fill="#cccccc" xml:space="preserve">%</text>
<text x="451.00" y="81.66" fill="#cccccc" xml:space="preserve">C0</text>
<text x="624.40" y="81.66" fill="#7ab890" xml:space="preserve">1</text>
<text x="634.60" y="81.66" fill="#cccccc" xml:space="preserve">%</text>
<text x="655.00" y="81.66" fill="#cccccc" xml:space="preserve">C2</text>
<text x="818.20" y="81.66" fill="#8ab880" xml:space="preserve">15</text>
<text x="838.60" y="81.66" fill="#cccccc" xml:space="preserve">%</text>
<text x="451.00" y="102.25" fill="#cccccc" xml:space="preserve">C1</text>
<text x="624.40" y="102.25" fill="#7ab890" xml:space="preserve">2</text>
<text x="634.60" y="102.25" fill="#cccccc" xml:space="preserve">%</text>
<text x="655.00" y="122.84" fill="#cccccc" xml:space="preserve">LAV: 0.01 0.33 0.41</text>
<text x="22.60" y="143.42" fill="#5a5a5a" xml:space="preserve">up 00:16:28</text>
<text x="43.00" y="184.60" fill="#eeeeee" font-weight="bold" xml:space="preserve">mem</text>
<text x="216.40" y="184.60" fill="#c04545" font-weight="bold" xml:space="preserve">d</text>
<text x="226.60" y="184.60" fill="#eeeeee" font-weight="bold" xml:space="preserve">isks</text>
<text x="338.80" y="184.60" fill="#c04545" xml:space="preserve">i</text>
<text x="349.00" y="184.60" fill="#cccccc" xml:space="preserve">o</text>
<text x="206.20" y="205.18" fill="#eeeeee" font-weight="bold" xml:space="preserve">root</text>
<text x="338.80" y="205.18" fill="#eeeeee" font-weight="bold" xml:space="preserve">24G</text>
<text x="22.60" y="205.18" fill="#eeeeee" font-weight="bold" xml:space="preserve">Total: 9.48 GiB</text>
<text x="22.60" y="225.77" fill="#cccccc" xml:space="preserve">U</text>
<text x="114.40" y="225.77" fill="#cccccc" xml:space="preserve">1.07 Gi</text>
<text x="22.60" y="246.36" fill="#cccccc" xml:space="preserve">A</text>
<text x="114.40" y="246.36" fill="#cccccc" xml:space="preserve">8.40 Gi</text>
<text x="22.60" y="266.94" fill="#cccccc" xml:space="preserve">C</text>
<text x="114.40" y="266.94" fill="#cccccc" xml:space="preserve">970 MiB</text>
<text x="22.60" y="287.53" fill="#cccccc" xml:space="preserve">F</text>
<text x="114.40" y="287.53" fill="#cccccc" xml:space="preserve">7.63 Gi</text>
<text x="206.20" y="225.77" fill="#cccccc" xml:space="preserve">IO</text>
<text x="196.00" y="246.36" fill="#cccccc" xml:space="preserve">U</text>
<text x="349.00" y="246.36" fill="#cccccc" xml:space="preserve">17G</text>
<text x="196.00" y="266.94" fill="#cccccc" xml:space="preserve">F</text>
<text x="338.80" y="266.94" fill="#cccccc" xml:space="preserve">7.5G</text>
<text x="43.00" y="369.88" fill="#eeeeee" font-weight="bold" xml:space="preserve">net</text>
<text x="124.60" y="369.88" fill="#c04545" font-weight="bold" xml:space="preserve">a</text>
<text x="134.80" y="369.88" fill="#eeeeee" font-weight="bold" xml:space="preserve">uto</text>
<text x="185.80" y="369.88" fill="#c04545" xml:space="preserve">z</text>
<text x="196.00" y="369.88" fill="#cccccc" xml:space="preserve">ero</text>
<text x="247.00" y="369.88" fill="#c04545" font-weight="bold" xml:space="preserve">&lt;b</text>
<text x="277.60" y="369.88" fill="#eeeeee" font-weight="bold" xml:space="preserve">enp0s3</text>
<text x="349.00" y="369.88" fill="#c04545" font-weight="bold" xml:space="preserve">n&gt;</text>
<text x="12.40" y="390.47" fill="#5a5a5a" xml:space="preserve">10K</text>
<text x="12.40" y="472.81" fill="#5a5a5a" xml:space="preserve">10K</text>
<text x="216.40" y="390.47" fill="#eeeeee" font-weight="bold" xml:space="preserve">download</text>
<text x="216.40" y="472.81" fill="#eeeeee" font-weight="bold" xml:space="preserve">upload</text>
<text x="216.40" y="411.05" fill="#cccccc" xml:space="preserve">0 Byte/s</text>
<text x="216.40" y="452.23" fill="#cccccc" xml:space="preserve">0 Byte/s</text>
<text x="430.60" y="184.60" fill="#eeeeee" font-weight="bold" xml:space="preserve">proc</text>
<text x="491.80" y="184.60" fill="#c04545" xml:space="preserve">f</text>
<text x="502.00" y="184.60" fill="#cccccc" xml:space="preserve">ilter</text>
<text x="655.00" y="184.60" fill="#cccccc" xml:space="preserve">tre</text>
<text x="685.60" y="184.60" fill="#c04545" xml:space="preserve">e</text>
<text x="716.20" y="184.60" fill="#c04545" font-weight="bold" xml:space="preserve">&lt;</text>
<text x="736.60" y="184.60" fill="#eeeeee" font-weight="bold" xml:space="preserve">cpu lazy</text>
<text x="828.40" y="184.60" fill="#c04545" font-weight="bold" xml:space="preserve">&gt;</text>
<text x="430.60" y="493.40" fill="#eeeeee" font-weight="bold" xml:space="preserve">select</text>
<text x="532.60" y="493.40" fill="#4a4a4a" xml:space="preserve">info</text>
<text x="614.20" y="493.40" fill="#4a4a4a" xml:space="preserve">signals</text>
<text x="797.80" y="493.40" fill="#eeeeee" font-weight="bold" xml:space="preserve">0/206</text>
<text x="440.80" y="205.18" fill="#eeeeee" font-weight="bold" xml:space="preserve">Pid:</text>
<text x="491.80" y="205.18" fill="#eeeeee" font-weight="bold" xml:space="preserve">Program:</text>
<text x="614.20" y="205.18" fill="#eeeeee" font-weight="bold" xml:space="preserve">User:</text>
<text x="685.60" y="205.18" fill="#eeeeee" font-weight="bold" xml:space="preserve">MemB</text>
<text x="797.80" y="205.18" fill="#eeeeee" font-weight="bold" xml:space="preserve">Cpu%</text>
<text x="440.80" y="225.77" fill="#c0c0c0" xml:space="preserve">1959</text>
<text x="491.80" y="225.77" fill="#80c896" xml:space="preserve">gnome-shel</text>
<text x="604.00" y="225.77" fill="#c0c0c0" xml:space="preserve">haro+</text>
<text x="675.40" y="225.77" fill="#80c896" xml:space="preserve">329M</text>
<text x="797.80" y="225.77" fill="#80c896" xml:space="preserve">1.7</text>
<text x="440.80" y="246.36" fill="#b6b6b6" xml:space="preserve">3156</text>
<text x="491.80" y="246.36" fill="#7abe8f" xml:space="preserve">btop</text>
<text x="604.00" y="246.36" fill="#b6b6b6" xml:space="preserve">haro+</text>
<text x="675.40" y="246.36" fill="#7abe8f" xml:space="preserve">6.5M</text>
<text x="797.80" y="246.36" fill="#7abe8f" xml:space="preserve">0.3</text>
<text x="451.00" y="266.94" fill="#acacac" xml:space="preserve">661</text>
<text x="491.80" y="266.94" fill="#75b388" xml:space="preserve">snapd</text>
<text x="604.00" y="266.94" fill="#acacac" xml:space="preserve">root</text>
<text x="685.60" y="266.94" fill="#75b388" xml:space="preserve">32M</text>
<text x="797.80" y="266.94" fill="#75b388" xml:space="preserve">0.0</text>
<text x="471.40" y="287.53" fill="#a2a2a2" xml:space="preserve">1</text>
<text x="491.80" y="287.53" fill="#70a881" xml:space="preserve">systemd</text>
<text x="604.00" y="287.53" fill="#a2a2a2" xml:space="preserve">root</text>
<text x="685.60" y="287.53" fill="#70a881" xml:space="preserve">14M</text>
<text x="797.80" y="287.53" fill="#70a881" xml:space="preserve">0.0</text>
<text x="440.80" y="308.12" fill="#999999" xml:space="preserve">2910</text>
<text x="491.80" y="308.12" fill="#6a9e7a" xml:space="preserve">gnome-term</text>
<text x="604.00" y="308.12" fill="#999999" xml:space="preserve">haro+</text>
<text x="685.60" y="308.12" fill="#6a9e7a" xml:space="preserve">55M</text>
<text x="797.80" y="308.12" fill="#6a9e7a" xml:space="preserve">0.3</text>
<text x="440.80" y="328.70" fill="#8f8f8f" xml:space="preserve">2278</text>
<text x="491.80" y="328.70" fill="#649473" xml:space="preserve">ibus-exten</text>
<text x="604.00" y="328.70" fill="#8f8f8f" xml:space="preserve">haro+</text>
<text x="685.60" y="328.70" fill="#649473" xml:space="preserve">28M</text>
<text x="797.80" y="328.70" fill="#649473" xml:space="preserve">0.0</text>
<text x="461.20" y="349.29" fill="#858585" xml:space="preserve">23</text>
<text x="491.80" y="349.29" fill="#5f896c" xml:space="preserve">migration/</text>
<text x="604.00" y="349.29" fill="#858585" xml:space="preserve">root</text>
<text x="695.80" y="349.29" fill="#5f896c" xml:space="preserve">0B</text>
<text x="797.80" y="349.29" fill="#5f896c" xml:space="preserve">0.0</text>
<text x="440.80" y="369.88" fill="#7b7b7b" xml:space="preserve">1136</text>
<text x="491.80" y="369.88" fill="#5a7e65" xml:space="preserve">fwupd</text>
<text x="604.00" y="369.88" fill="#7b7b7b" xml:space="preserve">root</text>
<text x="675.40" y="369.88" fill="#5a7e65" xml:space="preserve">143M</text>
<text x="797.80" y="369.88" fill="#5a7e65" xml:space="preserve">0.0</text>
<text x="451.00" y="390.47" fill="#717171" xml:space="preserve">634</text>
<text x="491.80" y="390.47" fill="#54745e" xml:space="preserve">dbus-daemo</text>
<text x="604.00" y="390.47" fill="#717171" xml:space="preserve">mess+</text>
<text x="675.40" y="390.47" fill="#54745e" xml:space="preserve">6.9M</text>
<text x="797.80" y="390.47" fill="#54745e" xml:space="preserve">0.0</text>
<text x="451.00" y="411.05" fill="#686868" xml:space="preserve">650</text>
<text x="491.80" y="411.05" fill="#4e6a57" xml:space="preserve">polkitd</text>
<text x="604.00" y="411.05" fill="#686868" xml:space="preserve">polk+</text>
<text x="685.60" y="411.05" fill="#4e6a57" xml:space="preserve">11M</text>
<text x="797.80" y="411.05" fill="#4e6a57" xml:space="preserve">0.0</text>
<text x="440.80" y="431.64" fill="#5e5e5e" xml:space="preserve">1706</text>
<text x="491.80" y="431.64" fill="#495f50" xml:space="preserve">systemd</text>
<text x="604.00" y="431.64" fill="#5e5e5e" xml:space="preserve">haro+</text>
<text x="685.60" y="431.64" fill="#495f50" xml:space="preserve">12M</text>
<text x="797.80" y="431.64" fill="#495f50" xml:space="preserve">0.0</text>
<text x="461.20" y="452.23" fill="#545454" xml:space="preserve">77</text>
<text x="491.80" y="452.23" fill="#445449" xml:space="preserve">kworker/1:</text>
<text x="604.00" y="452.23" fill="#545454" xml:space="preserve">root</text>
<text x="695.80" y="452.23" fill="#445449" xml:space="preserve">0B</text>
<text x="797.80" y="452.23" fill="#445449" xml:space="preserve">0.0</text>
<text x="451.00" y="472.81" fill="#4a4a4a" xml:space="preserve">259</text>
<text x="491.80" y="472.81" fill="#3e4a42" xml:space="preserve">systemd-jo</text>
<text x="604.00" y="472.81" fill="#4a4a4a" xml:space="preserve">root</text>
<text x="685.60" y="472.81" fill="#3e4a42" xml:space="preserve">17M</text>
<text x="797.80" y="472.81" fill="#3e4a42" xml:space="preserve">0.0</text>
</g></svg></body></html>
